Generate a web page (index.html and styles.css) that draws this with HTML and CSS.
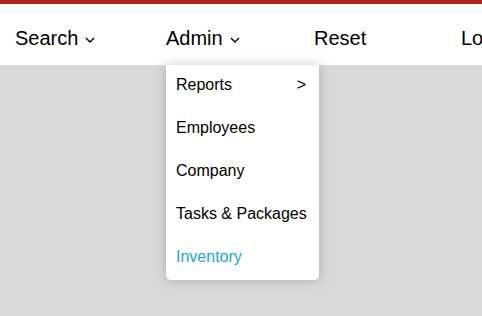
FILE: index.html
```html
<!DOCTYPE html>
<html lang="en">
<head>
    <meta charset="UTF-8">
    <meta name="viewport" content="width=device-width, initial-scale=1.0">
    <title>Admin</title>
    <link rel="stylesheet" href="styles.css">
</head>
<body>
    <div class="top-bar"></div>
    <nav class="main-nav">
        <div class="nav-item">
            <span>Search</span>
            <svg class="chevron" width="10" height="6" viewBox="0 0 10 6"><path d="M1 1 L5 5 L9 1" fill="none" stroke="#000" stroke-width="1.4"/></svg>
        </div>
        <div class="nav-item dropdown">
            <span>Admin</span>
            <svg class="chevron" width="10" height="6" viewBox="0 0 10 6"><path d="M1 1 L5 5 L9 1" fill="none" stroke="#000" stroke-width="1.4"/></svg>
            <ul class="dropdown-menu">
                <li class="has-sub"><span>Reports</span><span>&gt;</span></li>
                <li>Employees</li>
                <li>Company</li>
                <li>Tasks &amp; Packages</li>
                <li class="active">Inventory</li>
            </ul>
        </div>
        <div class="nav-item"><span>Reset</span></div>
        <div class="nav-item"><span>Logout</span></div>
    </nav>
    <main class="content"></main>
</body>
</html>
```

FILE: styles.css
```css
body {
    font-family: "Liberation Sans", Arial, sans-serif;
    margin: 0;
    padding: 0;
    background-color: #d9d9d9;
    overflow: hidden;
    width: 482px;
    height: 316px;
}
.top-bar {
    height: 4px;
    background: #b0201f;
}
.main-nav {
    display: grid;
    grid-template-columns: 151px 148px 147px 200px;
    background: #fff;
    padding: 21px 0 14px 15px;
    white-space: nowrap;
}
.nav-item {
    position: relative;
    display: flex;
    align-items: center;
    font-size: 20px;
    line-height: 26px;
    color: #000;
}
.chevron {
    margin-left: 7px;
    margin-top: 4px;
}
.dropdown-menu {
    position: absolute;
    top: 40px;
    left: 0;
    width: 153px;
    margin: 0;
    padding: 0;
    list-style: none;
    background: #fff;
    border-radius: 0 0 5px 5px;
    box-shadow: 0 0 12px rgba(0, 0, 0, 0.22);
    z-index: 2;
}
.dropdown-menu li {
    font-size: 16px;
    line-height: 20px;
    padding: 10px 13px 13px 10px;
    color: #000;
}
.dropdown-menu .has-sub {
    display: flex;
    justify-content: space-between;
}
.dropdown-menu .active {
    color: #17a8e0;
}
```
